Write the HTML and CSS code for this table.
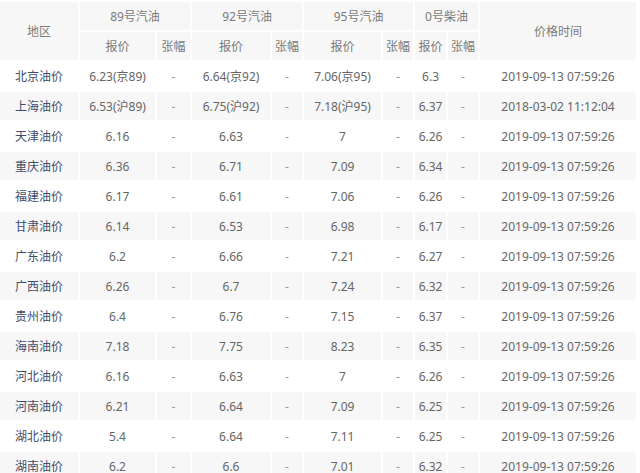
FILE: index.html
```html
<!DOCTYPE html>
<html lang="zh-CN">
<head>
<meta charset="utf-8">
<title>油价</title>
<link rel="stylesheet" href="styles.css">
</head>
<body>
<div class="wrap">
<table class="price">
  <colgroup>
    <col class="c-area"><col class="c-p89"><col class="c-z89"><col class="c-p92"><col class="c-z92"><col class="c-p95"><col class="c-z95"><col class="c-p0"><col class="c-z0"><col class="c-time">
  </colgroup>
  <thead>
    <tr>
      <th rowspan="2">地区</th>
      <th colspan="2">89号汽油</th>
      <th colspan="2">92号汽油</th>
      <th colspan="2">95号汽油</th>
      <th colspan="2">0号柴油</th>
      <th rowspan="2">价格时间</th>
    </tr>
    <tr>
      <th>报价</th><th>张幅</th>
      <th>报价</th><th>张幅</th>
      <th>报价</th><th>张幅</th>
      <th>报价</th><th>张幅</th>
    </tr>
  </thead>
  <tbody>
    <tr><td class="area">北京油价</td><td>6.23(京89)</td><td>-</td><td>6.64(京92)</td><td>-</td><td>7.06(京95)</td><td>-</td><td>6.3</td><td>-</td><td>2019-09-13 07:59:26</td></tr>
    <tr><td class="area">上海油价</td><td>6.53(沪89)</td><td>-</td><td>6.75(沪92)</td><td>-</td><td>7.18(沪95)</td><td>-</td><td>6.37</td><td>-</td><td>2018-03-02 11:12:04</td></tr>
    <tr><td class="area">天津油价</td><td>6.16</td><td>-</td><td>6.63</td><td>-</td><td>7</td><td>-</td><td>6.26</td><td>-</td><td>2019-09-13 07:59:26</td></tr>
    <tr><td class="area">重庆油价</td><td>6.36</td><td>-</td><td>6.71</td><td>-</td><td>7.09</td><td>-</td><td>6.34</td><td>-</td><td>2019-09-13 07:59:26</td></tr>
    <tr><td class="area">福建油价</td><td>6.17</td><td>-</td><td>6.61</td><td>-</td><td>7.06</td><td>-</td><td>6.26</td><td>-</td><td>2019-09-13 07:59:26</td></tr>
    <tr><td class="area">甘肃油价</td><td>6.14</td><td>-</td><td>6.53</td><td>-</td><td>6.98</td><td>-</td><td>6.17</td><td>-</td><td>2019-09-13 07:59:26</td></tr>
    <tr><td class="area">广东油价</td><td>6.2</td><td>-</td><td>6.66</td><td>-</td><td>7.21</td><td>-</td><td>6.27</td><td>-</td><td>2019-09-13 07:59:26</td></tr>
    <tr><td class="area">广西油价</td><td>6.26</td><td>-</td><td>6.7</td><td>-</td><td>7.24</td><td>-</td><td>6.32</td><td>-</td><td>2019-09-13 07:59:26</td></tr>
    <tr><td class="area">贵州油价</td><td>6.4</td><td>-</td><td>6.76</td><td>-</td><td>7.15</td><td>-</td><td>6.37</td><td>-</td><td>2019-09-13 07:59:26</td></tr>
    <tr><td class="area">海南油价</td><td>7.18</td><td>-</td><td>7.75</td><td>-</td><td>8.23</td><td>-</td><td>6.35</td><td>-</td><td>2019-09-13 07:59:26</td></tr>
    <tr><td class="area">河北油价</td><td>6.16</td><td>-</td><td>6.63</td><td>-</td><td>7</td><td>-</td><td>6.26</td><td>-</td><td>2019-09-13 07:59:26</td></tr>
    <tr><td class="area">河南油价</td><td>6.21</td><td>-</td><td>6.64</td><td>-</td><td>7.09</td><td>-</td><td>6.25</td><td>-</td><td>2019-09-13 07:59:26</td></tr>
    <tr><td class="area">湖北油价</td><td>5.4</td><td>-</td><td>6.64</td><td>-</td><td>7.11</td><td>-</td><td>6.25</td><td>-</td><td>2019-09-13 07:59:26</td></tr>
    <tr><td class="area">湖南油价</td><td>6.2</td><td>-</td><td>6.6</td><td>-</td><td>7.01</td><td>-</td><td>6.32</td><td>-</td><td>2019-09-13 07:59:26</td></tr>
  </tbody>
</table>
</div>
</body>
</html>
```

FILE: styles.css
```css
html, body {
  margin: 0;
  padding: 0;
  background: #fff;
}
.wrap {
  width: 640px;
  height: 473px;
  overflow: hidden;
}
.price {
  margin-left: -2px;
  width: 640px;
  table-layout: fixed;
  border-collapse: separate;
  border-spacing: 2px;
  font-family: "Noto Sans", "Noto Sans CJK SC", sans-serif;
  font-size: 12px;
  color: #666;
}
.c-area { width: 78px; }
.c-p89 { width: 75px; }
.c-z89 { width: 33px; }
.c-p92 { width: 78px; }
.c-z92 { width: 30px; }
.c-p95 { width: 77px; }
.c-z95 { width: 30px; }
.c-p0 { width: 31px; }
.c-z0 { width: 30px; }
.c-time { width: 156px; }
.price th,
.price td {
  height: 28px;
  padding: 0;
  text-align: center;
  vertical-align: middle;
  white-space: nowrap;
  overflow: hidden;
}
.price th {
  font-weight: normal;
  color: #7a7a7a;
  background: #f7f7f7;
}
.price td {
  background: #fff;
}
.price tbody tr:nth-child(even) td {
  background: #f7f7f7;
}
.price td.area {
  color: #3f4d6b;
}
.price td:nth-child(3),
.price td:nth-child(5),
.price td:nth-child(7),
.price td:nth-child(9) {
  color: #999;
}
```
